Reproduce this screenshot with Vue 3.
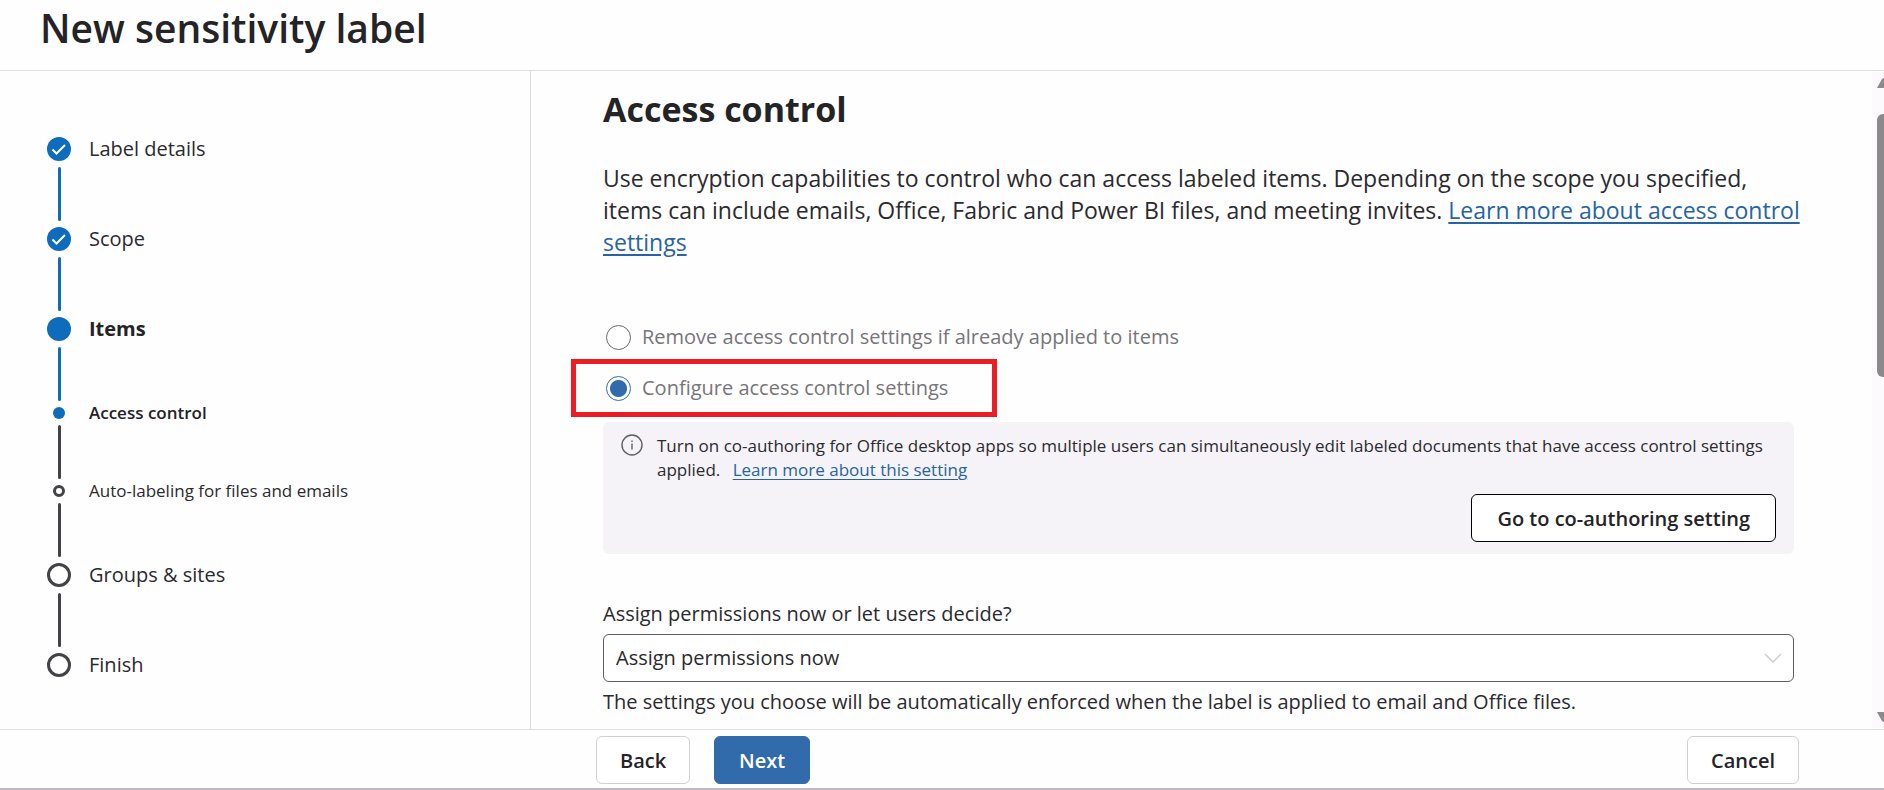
<template>
  <div class="wizard">
    <header class="wizard-header">
      <h1>New sensitivity label</h1>
    </header>

    <div class="wizard-body">
      <nav class="steps" aria-label="Progress">
        <ol>
          <li v-for="step in steps" :key="step.label" class="step" :class="[step.state, { sub: step.sub }]">
            <span class="marker">
              <svg v-if="step.state === 'done'" viewBox="0 0 24 24">
                <path d="M5.5 12.5 L9.5 16.5 L18 8" />
              </svg>
            </span>
            <span class="step-label">{{ step.label }}</span>
          </li>
        </ol>
      </nav>

      <main class="content">
        <h2>Access control</h2>
        <p class="intro">
          Use encryption capabilities to control who can access labeled items. Depending on the scope you specified,<br>
          items can include emails, Office, Fabric and Power BI files, and meeting invites.
          <a href="#">Learn more about access control settings</a>
        </p>

        <div class="radio-group">
          <label class="radio">
            <input v-model="mode" type="radio" name="mode" value="remove">
            <span>Remove access control settings if already applied to items</span>
          </label>
          <label class="radio highlighted">
            <input v-model="mode" type="radio" name="mode" value="configure">
            <span>Configure access control settings</span>
          </label>
        </div>

        <section class="notice">
          <svg class="info-icon" viewBox="0 0 22 22">
            <circle cx="11" cy="11" r="10" />
            <path d="M11 9.5 V15.5" />
            <path d="M11 6.5 V8" />
          </svg>
          <p>
            Turn on co-authoring for Office desktop apps so multiple users can simultaneously edit labeled documents
            that have access control settings applied. <a href="#">Learn more about this setting</a>
          </p>
          <button type="button" class="btn btn-strong">Go to co-authoring setting</button>
        </section>

        <div class="field">
          <label for="permissions">Assign permissions now or let users decide?</label>
          <div class="select-wrap">
            <select id="permissions" v-model="permissions">
              <option v-for="option in options" :key="option">{{ option }}</option>
            </select>
            <svg class="chevron" viewBox="0 0 18 10">
              <path d="M1 1 L9 9 L17 1" />
            </svg>
          </div>
          <p class="hint">
            The settings you choose will be automatically enforced when the label is applied to email and Office files.
          </p>
        </div>
      </main>

      <div class="scrollbar" aria-hidden="true">
        <svg class="arrow" viewBox="0 0 16 12"><path d="M1 11 L6 2 Q8 0 10 2 L15 11 Z" /></svg>
        <div class="track"><div class="thumb"></div></div>
        <svg class="arrow" viewBox="0 0 16 12"><path d="M1 1 L6 10 Q8 12 10 10 L15 1 Z" /></svg>
      </div>
    </div>

    <footer class="wizard-footer">
      <button type="button" class="btn">Back</button>
      <button type="button" class="btn btn-primary">Next</button>
      <button type="button" class="btn btn-cancel">Cancel</button>
    </footer>
  </div>
</template>

<script setup>
import { ref } from 'vue';

const steps = [
  { label: 'Label details', state: 'done' },
  { label: 'Scope', state: 'done' },
  { label: 'Items', state: 'current' },
  { label: 'Access control', state: 'current', sub: true },
  { label: 'Auto-labeling for files and emails', state: 'todo', sub: true },
  { label: 'Groups & sites', state: 'todo' },
  { label: 'Finish', state: 'todo' },
];

const options = ['Assign permissions now', 'Let users assign permissions when they apply the label'];

const mode = ref('configure');
const permissions = ref(options[0]);
</script>

<style>
body {
  margin: 0;
  background: #fefefe;
}
</style>

<style scoped>
* {
  box-sizing: border-box;
}

.wizard {
  display: flex;
  flex-direction: column;
  min-height: 100vh;
  border-bottom: 2px solid #c2b6c3;
  color: #2b2a2e;
  font-family: "Open Sans", "Noto Sans", sans-serif;
  font-size: 20px;
  line-height: 28px;
}

h1,
h2,
p,
ol {
  margin: 0;
  padding: 0;
}

a {
  color: #2764a3;
  text-underline-offset: 3px;
}

.wizard-header {
  padding: 2px 40px 16px;
  border-bottom: 1px solid #dedde0;
}

h1 {
  color: #242326;
  font-size: 39px;
  font-weight: 600;
  line-height: 52px;
}

.wizard-body {
  display: flex;
  flex: 1;
}

.steps {
  flex: none;
  width: 531px;
  padding: 66px 47px 0;
  border-right: 1px solid #dedde0;
}

.step {
  position: relative;
  display: flex;
  align-items: center;
  gap: 18px;
  height: 24px;
  margin-bottom: 66px;
  list-style: none;
}

.step.sub {
  height: 12px;
  font-size: 17px;
}

.step:last-child {
  margin-bottom: 0;
}

/* connector down to the next marker */
.step:not(:last-child)::after {
  content: "";
  position: absolute;
  top: calc(100% + 6px);
  left: 11px;
  width: 3px;
  height: 54px;
  border-radius: 2px;
  background: #0f6cbd;
}

.step.sub:not(:last-child)::after,
.step.todo:not(:last-child)::after {
  background: #444246;
}

.marker {
  width: 24px;
  height: 24px;
  border-radius: 50%;
  background: #0f6cbd;
}

.sub .marker {
  width: 12px;
  height: 12px;
  margin: 0 6px;
}

.todo .marker {
  border: 3px solid #444246;
  background: none;
}

.marker svg {
  display: block;
  fill: none;
  stroke: #fff;
  stroke-width: 2;
}

.current .step-label {
  color: #242326;
  font-weight: 700;
}

.current.sub .step-label {
  font-weight: 600;
}

.content {
  flex: 1;
  min-width: 0;
  padding: 14px 78px 8px 72px;
}

h2 {
  color: #242326;
  font-size: 34px;
  font-weight: 700;
  line-height: 48px;
}

.intro {
  margin: 29px -18px 0 0;
  font-size: 23px;
  line-height: 32px;
}

.radio-group {
  display: flex;
  flex-direction: column;
  align-items: flex-start;
  margin-top: 57px;
}

.radio {
  display: flex;
  align-items: center;
  gap: 11px;
  height: 44px;
  padding-left: 3px;
  color: #77757a;
}

.radio input {
  flex: none;
  width: 25px;
  height: 25px;
  margin: 0;
  border: 1px solid #6b696e;
  border-radius: 50%;
  appearance: none;
  background: #fff;
}

.radio input:checked {
  border-color: #316bac;
  background: radial-gradient(circle, #316bac 8px, transparent 9px);
}

.radio.highlighted {
  height: 58px;
  width: 426px;
  margin-left: -32px;
  padding-left: 30px;
  border: 5px solid #ed1c24;
}

.notice {
  display: grid;
  grid-template-columns: 22px 1fr;
  column-gap: 14px;
  margin-top: 5px;
  padding: 12px 18px;
  border-radius: 6px;
  background: #f5f3f7;
  font-size: 17px;
  line-height: 24px;
}

.info-icon {
  width: 22px;
  height: 22px;
  fill: none;
  stroke: #5f5d62;
  stroke-width: 1.4;
}

.notice a {
  margin-left: 8px;
}

.btn {
  height: 48px;
  padding: 0 23px;
  border: 1px solid #d1d0d3;
  border-radius: 6px;
  background: #fff;
  color: #242326;
  font: 600 20px "Open Sans", "Noto Sans", sans-serif;
}

.btn-strong {
  grid-column: 1 / -1;
  justify-self: end;
  margin-top: 12px;
  padding: 0 25px;
  border-color: #000;
}

.field {
  margin-top: 46px;
}

.field label,
.hint {
  display: block;
}

.select-wrap {
  position: relative;
  margin: 6px 0;
}

select {
  display: block;
  width: 100%;
  height: 48px;
  padding: 0 12px;
  border: 1px solid #5f5d62;
  border-radius: 6px;
  appearance: none;
  background: #fff;
  color: inherit;
  font: inherit;
}

.chevron {
  position: absolute;
  top: 19px;
  right: 12px;
  width: 18px;
  height: 10px;
  fill: none;
  stroke: #cfced1;
  stroke-width: 1.5;
  pointer-events: none;
}

.scrollbar {
  display: flex;
  flex-direction: column;
  width: 12px;
  padding: 6px 0;
  overflow: hidden;
  background: #fcfafd;
}

.arrow {
  flex: none;
  width: 16px;
  height: 12px;
  margin-left: 4px;
  fill: #8b898c;
}

.track {
  flex: 1;
  margin: 25px 0;
}

.thumb {
  width: 14px;
  height: 46%;
  margin-left: 5px;
  border-radius: 6px;
  background: #8b898c;
}

.wizard-footer {
  display: flex;
  gap: 24px;
  padding: 6px 85px 4px 596px;
  border-top: 1px solid #dedde0;
}

.btn-primary {
  min-width: 96px;
  border-color: #316bac;
  background: #316bac;
  color: #fff;
}

.btn-cancel {
  margin-left: auto;
}
</style>
